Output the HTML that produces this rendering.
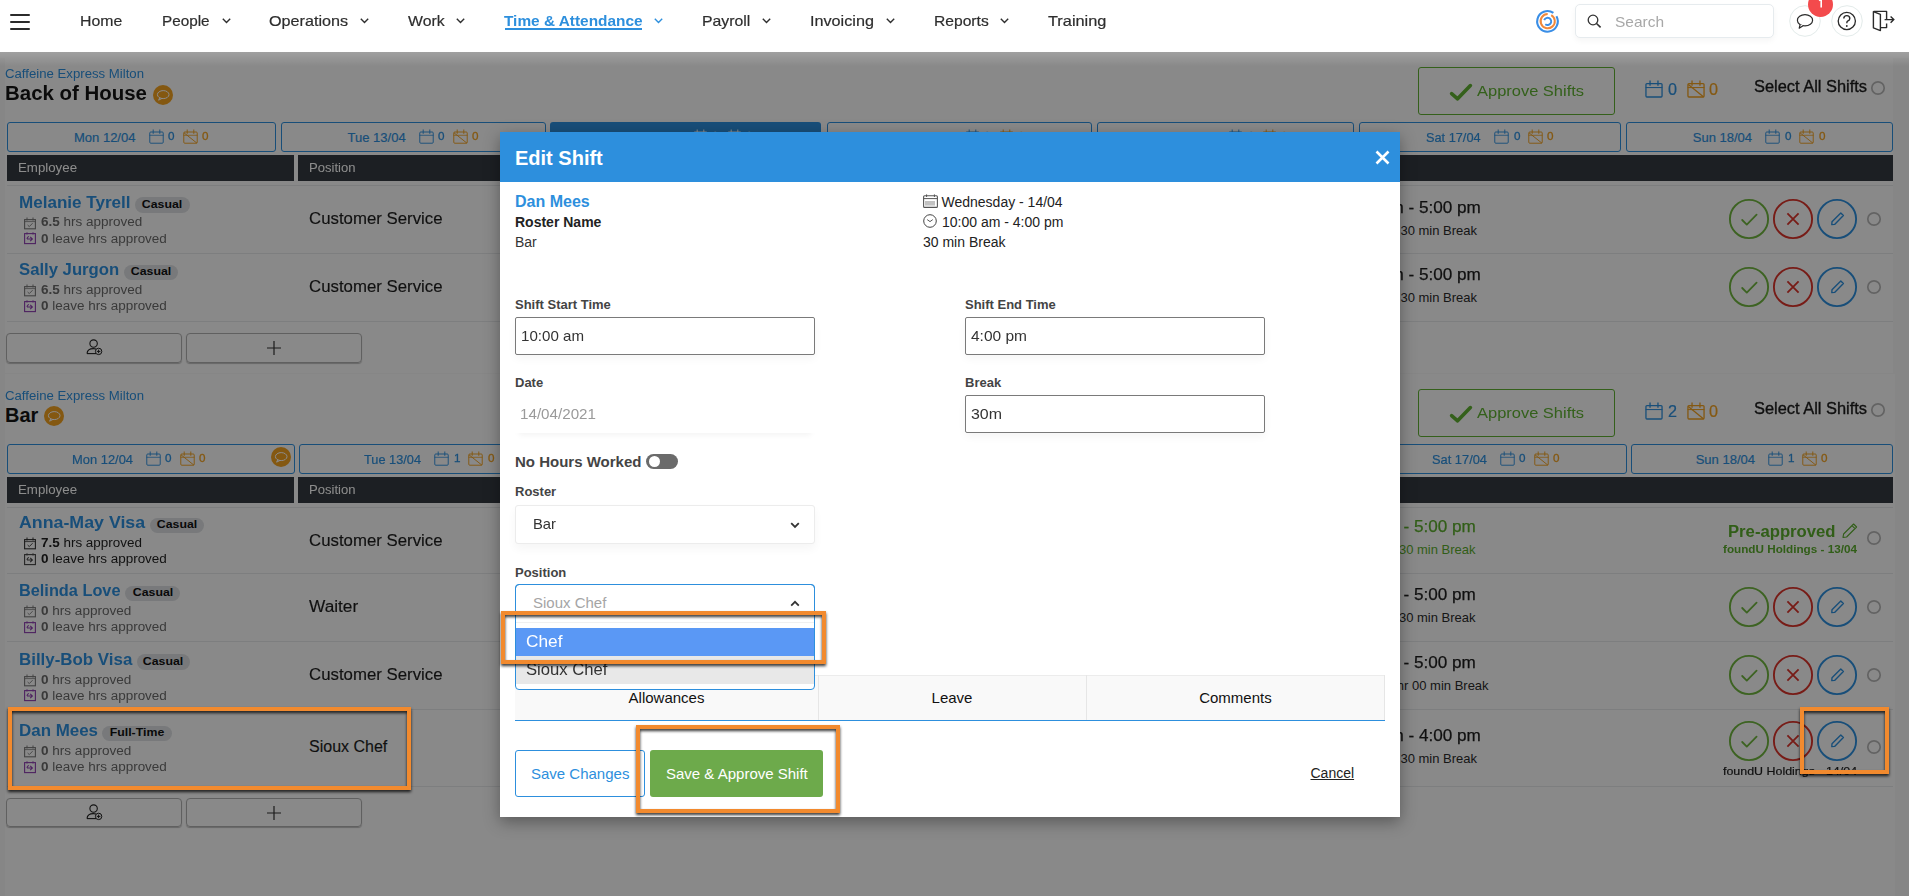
<!DOCTYPE html>
<html><head><meta charset="utf-8"><style>
html,body{margin:0;padding:0;}
body{width:1909px;height:896px;overflow:hidden;position:relative;background:#f4f4f4;font-family:"Liberation Sans",sans-serif;}
.a{position:absolute;}
.t{position:absolute;white-space:nowrap;line-height:1;}
svg.a{overflow:visible;}
</style></head><body>
<div class="a" style="left:0px;top:0px;width:1909px;height:52px;background:#fff;z-index:5"></div>
<div class="a" style="left:10px;top:14px;width:20px;height:2px;background:#2b2b2b;border-radius:1px;z-index:6;"></div>
<div class="a" style="left:10px;top:21px;width:20px;height:2px;background:#2b2b2b;border-radius:1px;z-index:6;"></div>
<div class="a" style="left:10px;top:28px;width:20px;height:2px;background:#2b2b2b;border-radius:1px;z-index:6;"></div>
<div class="t" style="left:79.7px;top:13.2px;font-size:15px;color:#2e2e2e;font-weight:400;transform:scaleX(1.055);transform-origin:0 0;z-index:6;-webkit-text-stroke:0.2px #2e2e2e;">Home</div>
<div class="t" style="left:161.8px;top:13.2px;font-size:15px;color:#2e2e2e;font-weight:400;transform:scaleX(1.019);transform-origin:0 0;z-index:6;-webkit-text-stroke:0.2px #2e2e2e;">People</div>
<svg class="a" style="left:222px;top:18px;z-index:6;" width="9" height="6" viewBox="0 0 9 6"><path d="M0.8 0.8 L4.5 4.5 L8.2 0.8" fill="none" stroke="#2e2e2e" stroke-width="1.4"/></svg>
<div class="t" style="left:269.2px;top:13.2px;font-size:15px;color:#2e2e2e;font-weight:400;transform:scaleX(1.077);transform-origin:0 0;z-index:6;-webkit-text-stroke:0.2px #2e2e2e;">Operations</div>
<svg class="a" style="left:359.6px;top:18px;z-index:6;" width="9" height="6" viewBox="0 0 9 6"><path d="M0.8 0.8 L4.5 4.5 L8.2 0.8" fill="none" stroke="#2e2e2e" stroke-width="1.4"/></svg>
<div class="t" style="left:407.6px;top:13.2px;font-size:15px;color:#2e2e2e;font-weight:400;transform:scaleX(1.054);transform-origin:0 0;z-index:6;-webkit-text-stroke:0.2px #2e2e2e;">Work</div>
<svg class="a" style="left:455.6px;top:18px;z-index:6;" width="9" height="6" viewBox="0 0 9 6"><path d="M0.8 0.8 L4.5 4.5 L8.2 0.8" fill="none" stroke="#2e2e2e" stroke-width="1.4"/></svg>
<div class="t" style="left:701.7px;top:13.2px;font-size:15px;color:#2e2e2e;font-weight:400;transform:scaleX(1.053);transform-origin:0 0;z-index:6;-webkit-text-stroke:0.2px #2e2e2e;">Payroll</div>
<svg class="a" style="left:762px;top:18px;z-index:6;" width="9" height="6" viewBox="0 0 9 6"><path d="M0.8 0.8 L4.5 4.5 L8.2 0.8" fill="none" stroke="#2e2e2e" stroke-width="1.4"/></svg>
<div class="t" style="left:809.9px;top:13.2px;font-size:15px;color:#2e2e2e;font-weight:400;transform:scaleX(1.079);transform-origin:0 0;z-index:6;-webkit-text-stroke:0.2px #2e2e2e;">Invoicing</div>
<svg class="a" style="left:885.7px;top:18px;z-index:6;" width="9" height="6" viewBox="0 0 9 6"><path d="M0.8 0.8 L4.5 4.5 L8.2 0.8" fill="none" stroke="#2e2e2e" stroke-width="1.4"/></svg>
<div class="t" style="left:933.7px;top:13.2px;font-size:15px;color:#2e2e2e;font-weight:400;transform:scaleX(1.042);transform-origin:0 0;z-index:6;-webkit-text-stroke:0.2px #2e2e2e;">Reports</div>
<svg class="a" style="left:999.5px;top:18px;z-index:6;" width="9" height="6" viewBox="0 0 9 6"><path d="M0.8 0.8 L4.5 4.5 L8.2 0.8" fill="none" stroke="#2e2e2e" stroke-width="1.4"/></svg>
<div class="t" style="left:1048.0px;top:13.2px;font-size:15px;color:#2e2e2e;font-weight:400;transform:scaleX(1.089);transform-origin:0 0;z-index:6;-webkit-text-stroke:0.2px #2e2e2e;">Training</div>
<div class="t" style="left:504.0px;top:13.2px;font-size:15px;color:#2d8fdd;font-weight:700;transform:scaleX(1.026);transform-origin:0 0;z-index:6;">Time &amp; Attendance</div>
<div class="a" style="left:504.6px;top:28px;width:137.19999999999993px;height:1.6000000000000014px;background:#2d8fdd;z-index:6;"></div>
<svg class="a" style="left:653.6px;top:18px;z-index:6;" width="9" height="6" viewBox="0 0 9 6"><path d="M0.8 0.8 L4.5 4.5 L8.2 0.8" fill="none" stroke="#2d8fdd" stroke-width="1.4"/></svg>
<svg class="a" style="left:1536px;top:10px;z-index:6;" width="24" height="24" viewBox="0 0 24 24"><path d="M20.42 6.25 A10.3 10.3 0 1 1 17.41 2.96" fill="none" stroke="#3a8ee6" stroke-width="2.1"/><path d="M15.25 5.05 A7.1 7.1 0 1 1 11.70 4.10" fill="none" stroke="#f0883a" stroke-width="2"/><path d="M8.22 10.17 A3.6 3.6 0 1 1 9.29 14.16" fill="none" stroke="#3a8ee6" stroke-width="1.9"/></svg>
<div class="a" style="left:1574.5px;top:3.5px;width:199.0px;height:34.0px;border:1px solid #e6ebee;border-radius:5px;box-sizing:border-box;box-shadow:0 3px 6px rgba(0,0,0,0.04);background:#fff;z-index:6;"></div>
<svg class="a" style="left:1587px;top:14px;z-index:6;" width="15" height="14" viewBox="0 0 15 14"><circle cx="6" cy="6" r="4.8" fill="none" stroke="#333" stroke-width="1.3"/><path d="M9.5 9.5 L13.6 13.4" stroke="#333" stroke-width="1.6"/></svg>
<div class="t" style="left:1614.5px;top:13.7px;font-size:15px;color:#a8a8a8;font-weight:400;transform:scaleX(1.031);transform-origin:0 0;z-index:6;">Search</div>
<svg class="a" style="left:1789px;top:5px;z-index:6;" width="32" height="32" viewBox="0 0 32 32"><circle cx="16" cy="16" r="15.3" fill="#fff" stroke="#e3ebea" stroke-width="1"/><ellipse cx="16" cy="15.2" rx="7.6" ry="5.6" fill="none" stroke="#2a2a2a" stroke-width="1.2"/><path d="M11.2 19.4 L10.2 23.2 L14.4 20.6" fill="#fff" stroke="#2a2a2a" stroke-width="1.2" stroke-linejoin="round"/></svg>
<svg class="a" style="left:1831px;top:5px;z-index:6;" width="32" height="32" viewBox="0 0 32 32"><circle cx="16" cy="16" r="15.3" fill="#fff" stroke="#e3ebea" stroke-width="1"/><circle cx="15.8" cy="16" r="8.6" fill="none" stroke="#2a2a2a" stroke-width="1.3"/><path d="M12.8 13.6 Q12.8 10.6 15.8 10.6 Q18.8 10.6 18.8 13.4 Q18.8 15.2 16.6 16.2 Q15.8 16.7 15.8 18.2" fill="none" stroke="#2a2a2a" stroke-width="1.4"/><circle cx="15.8" cy="21" r="0.9" fill="#2a2a2a"/></svg>
<svg class="a" style="left:1808px;top:-8px;z-index:6;" width="25" height="25" viewBox="0 0 25 25"><circle cx="12.5" cy="12.5" r="12.5" fill="#f34a4c"/></svg>
<svg class="a" style="left:1818px;top:-1px;z-index:6;" width="5" height="9" viewBox="0 0 5 9"><path d="M1 1.6 L3.2 0.4 L3.2 8.6" fill="none" stroke="#fff" stroke-width="1.6" stroke-linejoin="round"/></svg>
<svg class="a" style="left:1872px;top:10px;z-index:6;" width="24" height="22" viewBox="0 0 24 22"><path d="M1.4 1.6 L8.4 4.4 L8.4 20.6 L1.4 17.8 Z" fill="none" stroke="#2a2a2a" stroke-width="1.4" stroke-linejoin="round"/><path d="M1.6 1.4 L14.6 1.4 L14.6 9 M14.6 13.4 L14.6 17.6 L8.6 17.6" fill="none" stroke="#2a2a2a" stroke-width="1.4" stroke-linejoin="round"/><path d="M12.6 9.6 L21.8 9.6 M18.6 6.4 L21.8 9.6 L18.6 12.8" fill="none" stroke="#2a2a2a" stroke-width="1.4"/></svg>
<div class="a" style="left:0;top:52px;width:1909px;height:844px;overflow:hidden;"><div class="a" style="left:0;top:-52px;width:1909px;height:896px;"><div class="a" style="left:0px;top:52px;width:1909px;height:6px;background:#fafafa;"></div>
<div class="a" style="left:5px;top:58px;width:1888px;height:315px;background:#fafafa;"></div>
<div class="a" style="left:5px;top:374px;width:1890px;height:522px;background:#fafafa;"></div>
<div class="t" style="left:5.0px;top:68.0px;font-size:12px;color:#2d8fdd;font-weight:400;transform:scaleX(1.099);transform-origin:0 0;">Caffeine Express Milton</div>
<div class="t" style="left:5.0px;top:83.1px;font-size:20px;color:#151515;font-weight:700;transform:scaleX(1.022);transform-origin:0 0;">Back of House</div>
<svg class="a" style="left:153.0px;top:85.0px;" width="20" height="20" viewBox="0 0 20 20"><circle cx="10.0" cy="10.0" r="10.0" fill="#f0a020"/><ellipse cx="10.2" cy="9.6" rx="5.8" ry="4.0" fill="none" stroke="#fff" stroke-width="1"/><path d="M6.8 12.6 L5.6 15.2 L9.0 13.4" fill="none" stroke="#fff" stroke-width="1"/></svg>
<div class="a" style="left:1418px;top:67px;width:197px;height:47.5px;border:1.5px solid #5fb032;border-radius:3px;box-sizing:border-box;"></div>
<svg class="a" style="left:1449px;top:83px;" width="24" height="19" viewBox="0 0 24 19"><path d="M2.6 10.6 L8.6 15.8 L21.4 2.6" fill="none" stroke="#5fb032" stroke-width="3.6" stroke-linecap="round" stroke-linejoin="round"/></svg>
<div class="t" style="left:1476.5px;top:82.9px;font-size:15px;color:#5fb032;font-weight:400;transform:scaleX(1.097);transform-origin:0 0;">Approve Shifts</div>
<svg class="a" style="left:1644.5px;top:79.5px;" width="18" height="18" viewBox="0 0 18 18"><rect x="0.95" y="3.6" width="16.099999999999998" height="13.39" fill="none" stroke="#2d8fdd" stroke-width="1.3" rx="1"/><line x1="5.040000000000001" y1="0.5" x2="5.040000000000001" y2="5.76" stroke="#2d8fdd" stroke-width="1.3"/><line x1="12.959999999999999" y1="0.5" x2="12.959999999999999" y2="5.76" stroke="#2d8fdd" stroke-width="1.3"/><line x1="0.65" y1="7.56" x2="17.35" y2="7.56" stroke="#2d8fdd" stroke-width="1.04"/></svg>
<div class="t" style="left:1667.5px;top:82.0px;font-size:16px;color:#2d8fdd;font-weight:400;transform:scaleX(1.012);transform-origin:0 0;-webkit-text-stroke:0.2px;">0</div>
<svg class="a" style="left:1686.5px;top:79.5px;" width="18" height="18" viewBox="0 0 18 18"><rect x="0.95" y="3.6" width="16.099999999999998" height="13.39" fill="none" stroke="#f0a020" stroke-width="1.3" rx="1"/><line x1="5.040000000000001" y1="0.5" x2="5.040000000000001" y2="5.76" stroke="#f0a020" stroke-width="1.3"/><line x1="12.959999999999999" y1="0.5" x2="12.959999999999999" y2="5.76" stroke="#f0a020" stroke-width="1.3"/><line x1="0.65" y1="7.56" x2="17.35" y2="7.56" stroke="#f0a020" stroke-width="1.04"/><line x1="1.3" y1="4.5" x2="16.7" y2="17.099999999999998" stroke="#f0a020" stroke-width="1.3"/></svg>
<div class="t" style="left:1708.5px;top:82.0px;font-size:16px;color:#f0a020;font-weight:400;transform:scaleX(1.012);transform-origin:0 0;-webkit-text-stroke:0.2px;">0</div>
<div class="t" style="left:1753.5px;top:78.8px;font-size:16px;color:#1c1c1c;font-weight:400;transform:scaleX(1.025);transform-origin:0 0;-webkit-text-stroke:0.35px #1c1c1c;">Select All Shifts</div>
<svg class="a" style="left:1871px;top:81px;" width="14" height="14" viewBox="0 0 14 14"><circle cx="7" cy="7" r="6.2" fill="none" stroke="#b5b5b5" stroke-width="1.7"/></svg>
<div class="a" style="left:7px;top:122px;width:269px;height:29.5px;border:1.3px solid #2d8fdd;border-radius:3px;box-sizing:border-box;"></div>
<div class="t" style="left:74.0px;top:131.0px;font-size:13px;color:#2d8fdd;font-weight:400;-webkit-text-stroke:0.2px #2d8fdd;">Mon 12/04</div>
<svg class="a" style="left:148.5px;top:129.3px;" width="15" height="15" viewBox="0 0 15 15"><rect x="0.7749999999999999" y="3.0" width="13.450000000000001" height="11.225000000000001" fill="none" stroke="#2d8fdd" stroke-width="0.95" rx="1"/><line x1="4.2" y1="0.5" x2="4.2" y2="4.8" stroke="#2d8fdd" stroke-width="0.95"/><line x1="10.799999999999999" y1="0.5" x2="10.799999999999999" y2="4.8" stroke="#2d8fdd" stroke-width="0.95"/><line x1="0.475" y1="6.3" x2="14.525" y2="6.3" stroke="#2d8fdd" stroke-width="0.76"/></svg>
<div class="t" style="left:168.3px;top:130.9px;font-size:11.5px;color:#2d8fdd;font-weight:400;transform:scaleX(1.016);transform-origin:0 0;-webkit-text-stroke:0.3px #2d8fdd;">0</div>
<svg class="a" style="left:182.5px;top:129.3px;" width="15" height="15" viewBox="0 0 15 15"><rect x="0.7749999999999999" y="3.0" width="13.450000000000001" height="11.225000000000001" fill="none" stroke="#f0a020" stroke-width="0.95" rx="1"/><line x1="4.2" y1="0.5" x2="4.2" y2="4.8" stroke="#f0a020" stroke-width="0.95"/><line x1="10.799999999999999" y1="0.5" x2="10.799999999999999" y2="4.8" stroke="#f0a020" stroke-width="0.95"/><line x1="0.475" y1="6.3" x2="14.525" y2="6.3" stroke="#f0a020" stroke-width="0.76"/><line x1="0.95" y1="3.75" x2="14.05" y2="14.25" stroke="#f0a020" stroke-width="0.95"/></svg>
<div class="t" style="left:201.8px;top:130.9px;font-size:11.5px;color:#f0a020;font-weight:400;transform:scaleX(1.016);transform-origin:0 0;-webkit-text-stroke:0.3px #f0a020;">0</div>
<div class="a" style="left:281px;top:122px;width:264.6px;height:29.5px;border:1.3px solid #2d8fdd;border-radius:3px;box-sizing:border-box;"></div>
<div class="t" style="left:347.6px;top:131.0px;font-size:13px;color:#2d8fdd;font-weight:400;-webkit-text-stroke:0.2px #2d8fdd;">Tue 13/04</div>
<svg class="a" style="left:418.55px;top:129.3px;" width="15" height="15" viewBox="0 0 15 15"><rect x="0.7749999999999999" y="3.0" width="13.450000000000001" height="11.225000000000001" fill="none" stroke="#2d8fdd" stroke-width="0.95" rx="1"/><line x1="4.2" y1="0.5" x2="4.2" y2="4.8" stroke="#2d8fdd" stroke-width="0.95"/><line x1="10.799999999999999" y1="0.5" x2="10.799999999999999" y2="4.8" stroke="#2d8fdd" stroke-width="0.95"/><line x1="0.475" y1="6.3" x2="14.525" y2="6.3" stroke="#2d8fdd" stroke-width="0.76"/></svg>
<div class="t" style="left:438.4px;top:130.9px;font-size:11.5px;color:#2d8fdd;font-weight:400;transform:scaleX(1.016);transform-origin:0 0;-webkit-text-stroke:0.3px #2d8fdd;">0</div>
<svg class="a" style="left:452.55px;top:129.3px;" width="15" height="15" viewBox="0 0 15 15"><rect x="0.7749999999999999" y="3.0" width="13.450000000000001" height="11.225000000000001" fill="none" stroke="#f0a020" stroke-width="0.95" rx="1"/><line x1="4.2" y1="0.5" x2="4.2" y2="4.8" stroke="#f0a020" stroke-width="0.95"/><line x1="10.799999999999999" y1="0.5" x2="10.799999999999999" y2="4.8" stroke="#f0a020" stroke-width="0.95"/><line x1="0.475" y1="6.3" x2="14.525" y2="6.3" stroke="#f0a020" stroke-width="0.76"/><line x1="0.95" y1="3.75" x2="14.05" y2="14.25" stroke="#f0a020" stroke-width="0.95"/></svg>
<div class="t" style="left:471.9px;top:130.9px;font-size:11.5px;color:#f0a020;font-weight:400;transform:scaleX(1.016);transform-origin:0 0;-webkit-text-stroke:0.3px #f0a020;">0</div>
<div class="a" style="left:550.3px;top:122px;width:271.20000000000005px;height:29.5px;background:#2d8fdd;border-radius:3px 3px 0 0;"></div>
<div class="t" style="left:618.6px;top:131.0px;font-size:13px;color:#fff;font-weight:400;transform:scaleX(0.974);transform-origin:0 0;-webkit-text-stroke:0.2px #fff;">Wed 14/04</div>
<svg class="a" style="left:692.65px;top:129.3px;" width="15" height="15" viewBox="0 0 15 15"><rect x="0.7749999999999999" y="3.0" width="13.450000000000001" height="11.225000000000001" fill="none" stroke="#fff" stroke-width="0.95" rx="1"/><line x1="4.2" y1="0.5" x2="4.2" y2="4.8" stroke="#fff" stroke-width="0.95"/><line x1="10.799999999999999" y1="0.5" x2="10.799999999999999" y2="4.8" stroke="#fff" stroke-width="0.95"/><line x1="0.475" y1="6.3" x2="14.525" y2="6.3" stroke="#fff" stroke-width="0.76"/></svg>
<div class="t" style="left:712.4px;top:130.9px;font-size:11.5px;color:#fff;font-weight:400;transform:scaleX(1.016);transform-origin:0 0;-webkit-text-stroke:0.3px #fff;">0</div>
<svg class="a" style="left:726.65px;top:129.3px;" width="15" height="15" viewBox="0 0 15 15"><rect x="0.7749999999999999" y="3.0" width="13.450000000000001" height="11.225000000000001" fill="none" stroke="#fff" stroke-width="0.95" rx="1"/><line x1="4.2" y1="0.5" x2="4.2" y2="4.8" stroke="#fff" stroke-width="0.95"/><line x1="10.799999999999999" y1="0.5" x2="10.799999999999999" y2="4.8" stroke="#fff" stroke-width="0.95"/><line x1="0.475" y1="6.3" x2="14.525" y2="6.3" stroke="#fff" stroke-width="0.76"/><line x1="0.95" y1="3.75" x2="14.05" y2="14.25" stroke="#fff" stroke-width="0.95"/></svg>
<div class="t" style="left:745.9px;top:130.9px;font-size:11.5px;color:#fff;font-weight:400;transform:scaleX(1.016);transform-origin:0 0;-webkit-text-stroke:0.3px #fff;">0</div>
<div class="a" style="left:826.5px;top:122px;width:265.70000000000005px;height:29.5px;border:1.3px solid #2d8fdd;border-radius:3px;box-sizing:border-box;"></div>
<div class="t" style="left:893.6px;top:131.0px;font-size:13px;color:#2d8fdd;font-weight:400;transform:scaleX(0.991);transform-origin:0 0;-webkit-text-stroke:0.2px #2d8fdd;">Thu 15/04</div>
<svg class="a" style="left:964.6px;top:129.3px;" width="15" height="15" viewBox="0 0 15 15"><rect x="0.7749999999999999" y="3.0" width="13.450000000000001" height="11.225000000000001" fill="none" stroke="#2d8fdd" stroke-width="0.95" rx="1"/><line x1="4.2" y1="0.5" x2="4.2" y2="4.8" stroke="#2d8fdd" stroke-width="0.95"/><line x1="10.799999999999999" y1="0.5" x2="10.799999999999999" y2="4.8" stroke="#2d8fdd" stroke-width="0.95"/><line x1="0.475" y1="6.3" x2="14.525" y2="6.3" stroke="#2d8fdd" stroke-width="0.76"/></svg>
<div class="t" style="left:984.4px;top:130.9px;font-size:11.5px;color:#2d8fdd;font-weight:400;transform:scaleX(1.016);transform-origin:0 0;-webkit-text-stroke:0.3px #2d8fdd;">0</div>
<svg class="a" style="left:998.6px;top:129.3px;" width="15" height="15" viewBox="0 0 15 15"><rect x="0.7749999999999999" y="3.0" width="13.450000000000001" height="11.225000000000001" fill="none" stroke="#f0a020" stroke-width="0.95" rx="1"/><line x1="4.2" y1="0.5" x2="4.2" y2="4.8" stroke="#f0a020" stroke-width="0.95"/><line x1="10.799999999999999" y1="0.5" x2="10.799999999999999" y2="4.8" stroke="#f0a020" stroke-width="0.95"/><line x1="0.475" y1="6.3" x2="14.525" y2="6.3" stroke="#f0a020" stroke-width="0.76"/><line x1="0.95" y1="3.75" x2="14.05" y2="14.25" stroke="#f0a020" stroke-width="0.95"/></svg>
<div class="t" style="left:1017.9px;top:130.9px;font-size:11.5px;color:#f0a020;font-weight:400;transform:scaleX(1.016);transform-origin:0 0;-webkit-text-stroke:0.3px #f0a020;">0</div>
<div class="a" style="left:1097.2px;top:122px;width:257.20000000000005px;height:29.5px;border:1.3px solid #2d8fdd;border-radius:3px;box-sizing:border-box;"></div>
<div class="t" style="left:1163.1px;top:131.0px;font-size:13px;color:#2d8fdd;font-weight:400;transform:scaleX(1.014);transform-origin:0 0;-webkit-text-stroke:0.2px #2d8fdd;">Fri 16/04</div>
<svg class="a" style="left:1228.0500000000002px;top:129.3px;" width="15" height="15" viewBox="0 0 15 15"><rect x="0.7749999999999999" y="3.0" width="13.450000000000001" height="11.225000000000001" fill="none" stroke="#2d8fdd" stroke-width="0.95" rx="1"/><line x1="4.2" y1="0.5" x2="4.2" y2="4.8" stroke="#2d8fdd" stroke-width="0.95"/><line x1="10.799999999999999" y1="0.5" x2="10.799999999999999" y2="4.8" stroke="#2d8fdd" stroke-width="0.95"/><line x1="0.475" y1="6.3" x2="14.525" y2="6.3" stroke="#2d8fdd" stroke-width="0.76"/></svg>
<div class="t" style="left:1247.9px;top:130.9px;font-size:11.5px;color:#2d8fdd;font-weight:400;transform:scaleX(1.016);transform-origin:0 0;-webkit-text-stroke:0.3px #2d8fdd;">0</div>
<svg class="a" style="left:1262.0500000000002px;top:129.3px;" width="15" height="15" viewBox="0 0 15 15"><rect x="0.7749999999999999" y="3.0" width="13.450000000000001" height="11.225000000000001" fill="none" stroke="#f0a020" stroke-width="0.95" rx="1"/><line x1="4.2" y1="0.5" x2="4.2" y2="4.8" stroke="#f0a020" stroke-width="0.95"/><line x1="10.799999999999999" y1="0.5" x2="10.799999999999999" y2="4.8" stroke="#f0a020" stroke-width="0.95"/><line x1="0.475" y1="6.3" x2="14.525" y2="6.3" stroke="#f0a020" stroke-width="0.76"/><line x1="0.95" y1="3.75" x2="14.05" y2="14.25" stroke="#f0a020" stroke-width="0.95"/></svg>
<div class="t" style="left:1281.4px;top:130.9px;font-size:11.5px;color:#f0a020;font-weight:400;transform:scaleX(1.016);transform-origin:0 0;-webkit-text-stroke:0.3px #f0a020;">0</div>
<div class="a" style="left:1359.4px;top:122px;width:261.89999999999986px;height:29.5px;border:1.3px solid #2d8fdd;border-radius:3px;box-sizing:border-box;"></div>
<div class="t" style="left:1426.3px;top:131.0px;font-size:13px;color:#2d8fdd;font-weight:400;transform:scaleX(0.981);transform-origin:0 0;-webkit-text-stroke:0.2px #2d8fdd;">Sat 17/04</div>
<svg class="a" style="left:1493.8999999999999px;top:129.3px;" width="15" height="15" viewBox="0 0 15 15"><rect x="0.7749999999999999" y="3.0" width="13.450000000000001" height="11.225000000000001" fill="none" stroke="#2d8fdd" stroke-width="0.95" rx="1"/><line x1="4.2" y1="0.5" x2="4.2" y2="4.8" stroke="#2d8fdd" stroke-width="0.95"/><line x1="10.799999999999999" y1="0.5" x2="10.799999999999999" y2="4.8" stroke="#2d8fdd" stroke-width="0.95"/><line x1="0.475" y1="6.3" x2="14.525" y2="6.3" stroke="#2d8fdd" stroke-width="0.76"/></svg>
<div class="t" style="left:1513.7px;top:130.9px;font-size:11.5px;color:#2d8fdd;font-weight:400;transform:scaleX(1.016);transform-origin:0 0;-webkit-text-stroke:0.3px #2d8fdd;">0</div>
<svg class="a" style="left:1527.8999999999999px;top:129.3px;" width="15" height="15" viewBox="0 0 15 15"><rect x="0.7749999999999999" y="3.0" width="13.450000000000001" height="11.225000000000001" fill="none" stroke="#f0a020" stroke-width="0.95" rx="1"/><line x1="4.2" y1="0.5" x2="4.2" y2="4.8" stroke="#f0a020" stroke-width="0.95"/><line x1="10.799999999999999" y1="0.5" x2="10.799999999999999" y2="4.8" stroke="#f0a020" stroke-width="0.95"/><line x1="0.475" y1="6.3" x2="14.525" y2="6.3" stroke="#f0a020" stroke-width="0.76"/><line x1="0.95" y1="3.75" x2="14.05" y2="14.25" stroke="#f0a020" stroke-width="0.95"/></svg>
<div class="t" style="left:1547.2px;top:130.9px;font-size:11.5px;color:#f0a020;font-weight:400;transform:scaleX(1.016);transform-origin:0 0;-webkit-text-stroke:0.3px #f0a020;">0</div>
<div class="a" style="left:1626px;top:122px;width:266.5px;height:29.5px;border:1.3px solid #2d8fdd;border-radius:3px;box-sizing:border-box;"></div>
<div class="t" style="left:1692.8px;top:131.0px;font-size:13px;color:#2d8fdd;font-weight:400;-webkit-text-stroke:0.2px #2d8fdd;">Sun 18/04</div>
<svg class="a" style="left:1765.25px;top:129.3px;" width="15" height="15" viewBox="0 0 15 15"><rect x="0.7749999999999999" y="3.0" width="13.450000000000001" height="11.225000000000001" fill="none" stroke="#2d8fdd" stroke-width="0.95" rx="1"/><line x1="4.2" y1="0.5" x2="4.2" y2="4.8" stroke="#2d8fdd" stroke-width="0.95"/><line x1="10.799999999999999" y1="0.5" x2="10.799999999999999" y2="4.8" stroke="#2d8fdd" stroke-width="0.95"/><line x1="0.475" y1="6.3" x2="14.525" y2="6.3" stroke="#2d8fdd" stroke-width="0.76"/></svg>
<div class="t" style="left:1785.0px;top:130.9px;font-size:11.5px;color:#2d8fdd;font-weight:400;transform:scaleX(1.016);transform-origin:0 0;-webkit-text-stroke:0.3px #2d8fdd;">0</div>
<svg class="a" style="left:1799.25px;top:129.3px;" width="15" height="15" viewBox="0 0 15 15"><rect x="0.7749999999999999" y="3.0" width="13.450000000000001" height="11.225000000000001" fill="none" stroke="#f0a020" stroke-width="0.95" rx="1"/><line x1="4.2" y1="0.5" x2="4.2" y2="4.8" stroke="#f0a020" stroke-width="0.95"/><line x1="10.799999999999999" y1="0.5" x2="10.799999999999999" y2="4.8" stroke="#f0a020" stroke-width="0.95"/><line x1="0.475" y1="6.3" x2="14.525" y2="6.3" stroke="#f0a020" stroke-width="0.76"/><line x1="0.95" y1="3.75" x2="14.05" y2="14.25" stroke="#f0a020" stroke-width="0.95"/></svg>
<div class="t" style="left:1818.5px;top:130.9px;font-size:11.5px;color:#f0a020;font-weight:400;transform:scaleX(1.016);transform-origin:0 0;-webkit-text-stroke:0.3px #f0a020;">0</div>
<div class="a" style="left:7px;top:155px;width:287px;height:25.69999999999999px;background:#343a40;"></div>
<div class="a" style="left:298px;top:155px;width:1594.5px;height:25.69999999999999px;background:#343a40;"></div>
<div class="t" style="left:18.0px;top:161.6px;font-size:12px;color:#fff;font-weight:400;transform:scaleX(1.106);transform-origin:0 0;">Employee</div>
<div class="t" style="left:309.0px;top:162.4px;font-size:12px;color:#fff;font-weight:400;transform:scaleX(1.089);transform-origin:0 0;">Position</div>
<div class="a" style="left:7px;top:185.4px;width:1885.5px;height:1.0px;background:#e4e6e8;"></div>
<div class="a" style="left:7px;top:253px;width:1885.5px;height:1px;background:#e4e6e8;"></div>
<div class="a" style="left:7px;top:321px;width:1885.5px;height:1px;background:#e4e6e8;"></div>
<div class="t" style="left:19.0px;top:194.7px;font-size:16px;color:#2d8fdd;font-weight:700;transform:scaleX(1.066);transform-origin:0 0;">Melanie Tyrell</div>
<div class="a" style="left:135px;top:197.2px;width:54.599999999999994px;height:15.599999999999994px;background:#dadde0;border-radius:8px;"></div>
<div class="t" style="left:162.3px;top:198.5px;font-size:11px;color:#111;font-weight:700;transform:translateX(-50%) scaleX(1.12);">Casual</div>
<svg class="a" style="left:24px;top:216.7px;" width="12" height="12" viewBox="0 0 12 12"><rect x="0.6" y="2.6" width="10.8" height="9.2" fill="none" stroke="#7a7a7a" stroke-width="1.1"/><line x1="3" y1="0.5" x2="3" y2="3.5" stroke="#7a7a7a" stroke-width="1"/><line x1="9" y1="0.5" x2="9" y2="3.5" stroke="#7a7a7a" stroke-width="1"/><line x1="0.6" y1="4.6" x2="11.4" y2="4.6" stroke="#7a7a7a" stroke-width="0.8"/><path d="M3.6 8 L5.3 9.6 L8.6 6.2" fill="none" stroke="#7a7a7a" stroke-width="0.9"/></svg>
<div class="t" style="left:40.5px;top:216.4px;font-size:12.5px;color:#6a6a6a;font-weight:400;transform:scaleX(1.080);transform-origin:0 0;"><b>6.5</b> hrs approved</div>
<svg class="a" style="left:24px;top:232.1px;" width="12" height="12" viewBox="0 0 12 12"><rect x="0.6" y="1.6" width="10.8" height="10" fill="none" stroke="#8e3fb0" stroke-width="1.1"/><line x1="3" y1="0.3" x2="3" y2="2.5" stroke="#8e3fb0" stroke-width="1"/><line x1="9" y1="0.3" x2="9" y2="2.5" stroke="#8e3fb0" stroke-width="1"/><path d="M3 7 H8.2 M6.2 4.8 L8.4 7 L6.2 9.2 M5 4.5 Q3 4.8 3 7" fill="none" stroke="#8e3fb0" stroke-width="1.1"/></svg>
<div class="t" style="left:40.5px;top:232.6px;font-size:12.5px;color:#6a6a6a;font-weight:400;transform:scaleX(1.078);transform-origin:0 0;"><b>0</b> leave hrs approved</div>
<div class="t" style="left:309.0px;top:211.1px;font-size:16px;color:#1e1e1e;font-weight:400;transform:scaleX(1.050);transform-origin:0 0;-webkit-text-stroke:0.15px #1e1e1e;">Customer Service</div>
<div class="t" style="left:19.0px;top:262.1px;font-size:16px;color:#2d8fdd;font-weight:700;transform:scaleX(1.043);transform-origin:0 0;">Sally Jurgon</div>
<div class="a" style="left:124.2px;top:264.6px;width:53.499999999999986px;height:15.600000000000023px;background:#dadde0;border-radius:8px;"></div>
<div class="t" style="left:150.9px;top:265.9px;font-size:11px;color:#111;font-weight:700;transform:translateX(-50%) scaleX(1.12);">Casual</div>
<svg class="a" style="left:24px;top:284.1px;" width="12" height="12" viewBox="0 0 12 12"><rect x="0.6" y="2.6" width="10.8" height="9.2" fill="none" stroke="#7a7a7a" stroke-width="1.1"/><line x1="3" y1="0.5" x2="3" y2="3.5" stroke="#7a7a7a" stroke-width="1"/><line x1="9" y1="0.5" x2="9" y2="3.5" stroke="#7a7a7a" stroke-width="1"/><line x1="0.6" y1="4.6" x2="11.4" y2="4.6" stroke="#7a7a7a" stroke-width="0.8"/><path d="M3.6 8 L5.3 9.6 L8.6 6.2" fill="none" stroke="#7a7a7a" stroke-width="0.9"/></svg>
<div class="t" style="left:40.5px;top:283.8px;font-size:12.5px;color:#6a6a6a;font-weight:400;transform:scaleX(1.080);transform-origin:0 0;"><b>6.5</b> hrs approved</div>
<svg class="a" style="left:24px;top:299.5px;" width="12" height="12" viewBox="0 0 12 12"><rect x="0.6" y="1.6" width="10.8" height="10" fill="none" stroke="#8e3fb0" stroke-width="1.1"/><line x1="3" y1="0.3" x2="3" y2="2.5" stroke="#8e3fb0" stroke-width="1"/><line x1="9" y1="0.3" x2="9" y2="2.5" stroke="#8e3fb0" stroke-width="1"/><path d="M3 7 H8.2 M6.2 4.8 L8.4 7 L6.2 9.2 M5 4.5 Q3 4.8 3 7" fill="none" stroke="#8e3fb0" stroke-width="1.1"/></svg>
<div class="t" style="left:40.5px;top:300.0px;font-size:12.5px;color:#6a6a6a;font-weight:400;transform:scaleX(1.078);transform-origin:0 0;"><b>0</b> leave hrs approved</div>
<div class="t" style="left:309.0px;top:278.5px;font-size:16px;color:#1e1e1e;font-weight:400;transform:scaleX(1.050);transform-origin:0 0;-webkit-text-stroke:0.15px #1e1e1e;">Customer Service</div>
<div class="t" style="right:428.0px;top:199.9px;font-size:16px;color:#1e1e1e;font-weight:400;-webkit-text-stroke:0.25px #1e1e1e;transform:scaleX(1.07);transform-origin:100% 0;">10:00 am - 5:00 pm</div>
<div class="t" style="right:432.0px;top:224.0px;font-size:13px;color:#2a2a2a;font-weight:400;">30 min Break</div>
<svg class="a" style="left:1729px;top:199px;" width="40" height="40" viewBox="0 0 40 40"><circle cx="20" cy="20" r="19.1" fill="none" stroke="#6fb43f" stroke-width="1.9"/><path d="M13.2 21 L17.8 25.6 L27.6 15.6" fill="none" stroke="#6fb43f" stroke-width="1.8" stroke-linecap="round" stroke-linejoin="round"/></svg>
<svg class="a" style="left:1773px;top:199px;" width="40" height="40" viewBox="0 0 40 40"><circle cx="20" cy="20" r="19.1" fill="none" stroke="#d9342b" stroke-width="1.9"/><path d="M14.4 14.4 L25.6 25.6 M25.6 14.4 L14.4 25.6" fill="none" stroke="#d9342b" stroke-width="1.8"/></svg>
<svg class="a" style="left:1817px;top:199px;" width="40" height="40" viewBox="0 0 40 40"><circle cx="20" cy="20" r="19.1" fill="none" stroke="#2d8fdd" stroke-width="1.9"/><path d="M15 22.8 L23.8 14 L26.4 16.6 L17.6 25.4 L14.8 25.6 Z" fill="none" stroke="#2d8fdd" stroke-width="1.4" stroke-linejoin="round"/></svg>
<svg class="a" style="left:1867px;top:212px;" width="14" height="14" viewBox="0 0 14 14"><circle cx="7" cy="7" r="6.2" fill="none" stroke="#b5b5b5" stroke-width="1.7"/></svg>
<div class="t" style="right:428.0px;top:267.3px;font-size:16px;color:#1e1e1e;font-weight:400;-webkit-text-stroke:0.25px #1e1e1e;transform:scaleX(1.07);transform-origin:100% 0;">10:00 am - 5:00 pm</div>
<div class="t" style="right:432.0px;top:291.4px;font-size:13px;color:#2a2a2a;font-weight:400;">30 min Break</div>
<svg class="a" style="left:1729px;top:267px;" width="40" height="40" viewBox="0 0 40 40"><circle cx="20" cy="20" r="19.1" fill="none" stroke="#6fb43f" stroke-width="1.9"/><path d="M13.2 21 L17.8 25.6 L27.6 15.6" fill="none" stroke="#6fb43f" stroke-width="1.8" stroke-linecap="round" stroke-linejoin="round"/></svg>
<svg class="a" style="left:1773px;top:267px;" width="40" height="40" viewBox="0 0 40 40"><circle cx="20" cy="20" r="19.1" fill="none" stroke="#d9342b" stroke-width="1.9"/><path d="M14.4 14.4 L25.6 25.6 M25.6 14.4 L14.4 25.6" fill="none" stroke="#d9342b" stroke-width="1.8"/></svg>
<svg class="a" style="left:1817px;top:267px;" width="40" height="40" viewBox="0 0 40 40"><circle cx="20" cy="20" r="19.1" fill="none" stroke="#2d8fdd" stroke-width="1.9"/><path d="M15 22.8 L23.8 14 L26.4 16.6 L17.6 25.4 L14.8 25.6 Z" fill="none" stroke="#2d8fdd" stroke-width="1.4" stroke-linejoin="round"/></svg>
<svg class="a" style="left:1867px;top:280px;" width="14" height="14" viewBox="0 0 14 14"><circle cx="7" cy="7" r="6.2" fill="none" stroke="#b5b5b5" stroke-width="1.7"/></svg>
<div class="a" style="left:5.5px;top:333px;width:176.1px;height:29.600000000000023px;border:1px solid #b0b0b0;border-radius:4px;box-sizing:border-box;box-shadow:0 1px 1px rgba(0,0,0,0.25);"></div>
<div class="a" style="left:186.4px;top:333px;width:175.9px;height:29.600000000000023px;border:1px solid #b0b0b0;border-radius:4px;box-sizing:border-box;box-shadow:0 1px 1px rgba(0,0,0,0.25);"></div>
<svg class="a" style="left:85.5px;top:339px;" width="17" height="16" viewBox="0 0 17 16"><circle cx="7.6" cy="4.6" r="3.7" fill="none" stroke="#222" stroke-width="1.1"/><path d="M1 14.6 Q1.4 9.6 7.4 9.6 Q9 9.6 10 10" fill="none" stroke="#222" stroke-width="1.1"/><path d="M1 14.6 L10 14.6" stroke="#222" stroke-width="1.1"/><circle cx="12.6" cy="12.4" r="3.2" fill="none" stroke="#222" stroke-width="1"/><path d="M12.6 10.6 V14.2 M10.8 12.4 H14.4" stroke="#222" stroke-width="1"/></svg>
<svg class="a" style="left:266px;top:340px;" width="16" height="16" viewBox="0 0 16 16"><path d="M8 1 V15 M1 8 H15" stroke="#333" stroke-width="1.2"/></svg>
<div class="t" style="left:5.0px;top:390.0px;font-size:12px;color:#2d8fdd;font-weight:400;transform:scaleX(1.099);transform-origin:0 0;">Caffeine Express Milton</div>
<div class="t" style="left:5.0px;top:405.1px;font-size:20px;color:#151515;font-weight:700;">Bar</div>
<svg class="a" style="left:44.0px;top:406.0px;" width="20" height="20" viewBox="0 0 20 20"><circle cx="10.0" cy="10.0" r="10.0" fill="#f0a020"/><ellipse cx="10.2" cy="9.6" rx="5.8" ry="4.0" fill="none" stroke="#fff" stroke-width="1"/><path d="M6.8 12.6 L5.6 15.2 L9.0 13.4" fill="none" stroke="#fff" stroke-width="1"/></svg>
<div class="a" style="left:1418px;top:389px;width:197px;height:47.5px;border:1.5px solid #5fb032;border-radius:3px;box-sizing:border-box;"></div>
<svg class="a" style="left:1449px;top:405px;" width="24" height="19" viewBox="0 0 24 19"><path d="M2.6 10.6 L8.6 15.8 L21.4 2.6" fill="none" stroke="#5fb032" stroke-width="3.6" stroke-linecap="round" stroke-linejoin="round"/></svg>
<div class="t" style="left:1476.5px;top:404.9px;font-size:15px;color:#5fb032;font-weight:400;transform:scaleX(1.097);transform-origin:0 0;">Approve Shifts</div>
<svg class="a" style="left:1644.5px;top:401.5px;" width="18" height="18" viewBox="0 0 18 18"><rect x="0.95" y="3.6" width="16.099999999999998" height="13.39" fill="none" stroke="#2d8fdd" stroke-width="1.3" rx="1"/><line x1="5.040000000000001" y1="0.5" x2="5.040000000000001" y2="5.76" stroke="#2d8fdd" stroke-width="1.3"/><line x1="12.959999999999999" y1="0.5" x2="12.959999999999999" y2="5.76" stroke="#2d8fdd" stroke-width="1.3"/><line x1="0.65" y1="7.56" x2="17.35" y2="7.56" stroke="#2d8fdd" stroke-width="1.04"/></svg>
<div class="t" style="left:1667.5px;top:404.0px;font-size:16px;color:#2d8fdd;font-weight:400;transform:scaleX(1.012);transform-origin:0 0;-webkit-text-stroke:0.2px;">2</div>
<svg class="a" style="left:1686.5px;top:401.5px;" width="18" height="18" viewBox="0 0 18 18"><rect x="0.95" y="3.6" width="16.099999999999998" height="13.39" fill="none" stroke="#f0a020" stroke-width="1.3" rx="1"/><line x1="5.040000000000001" y1="0.5" x2="5.040000000000001" y2="5.76" stroke="#f0a020" stroke-width="1.3"/><line x1="12.959999999999999" y1="0.5" x2="12.959999999999999" y2="5.76" stroke="#f0a020" stroke-width="1.3"/><line x1="0.65" y1="7.56" x2="17.35" y2="7.56" stroke="#f0a020" stroke-width="1.04"/><line x1="1.3" y1="4.5" x2="16.7" y2="17.099999999999998" stroke="#f0a020" stroke-width="1.3"/></svg>
<div class="t" style="left:1708.5px;top:404.0px;font-size:16px;color:#f0a020;font-weight:400;transform:scaleX(1.012);transform-origin:0 0;-webkit-text-stroke:0.2px;">0</div>
<div class="t" style="left:1753.5px;top:400.8px;font-size:16px;color:#1c1c1c;font-weight:400;transform:scaleX(1.025);transform-origin:0 0;-webkit-text-stroke:0.35px #1c1c1c;">Select All Shifts</div>
<svg class="a" style="left:1871px;top:403px;" width="14" height="14" viewBox="0 0 14 14"><circle cx="7" cy="7" r="6.2" fill="none" stroke="#b5b5b5" stroke-width="1.7"/></svg>
<div class="a" style="left:7px;top:444px;width:287.5px;height:29.5px;border:1.3px solid #2d8fdd;border-radius:3px;box-sizing:border-box;"></div>
<div class="t" style="left:71.5px;top:453.0px;font-size:13px;color:#2d8fdd;font-weight:400;transform:scaleX(0.993);transform-origin:0 0;-webkit-text-stroke:0.2px #2d8fdd;">Mon 12/04</div>
<svg class="a" style="left:145.5px;top:451.3px;" width="15" height="15" viewBox="0 0 15 15"><rect x="0.7749999999999999" y="3.0" width="13.450000000000001" height="11.225000000000001" fill="none" stroke="#2d8fdd" stroke-width="0.95" rx="1"/><line x1="4.2" y1="0.5" x2="4.2" y2="4.8" stroke="#2d8fdd" stroke-width="0.95"/><line x1="10.799999999999999" y1="0.5" x2="10.799999999999999" y2="4.8" stroke="#2d8fdd" stroke-width="0.95"/><line x1="0.475" y1="6.3" x2="14.525" y2="6.3" stroke="#2d8fdd" stroke-width="0.76"/></svg>
<div class="t" style="left:165.3px;top:452.9px;font-size:11.5px;color:#2d8fdd;font-weight:400;transform:scaleX(1.016);transform-origin:0 0;-webkit-text-stroke:0.3px #2d8fdd;">0</div>
<svg class="a" style="left:179.5px;top:451.3px;" width="15" height="15" viewBox="0 0 15 15"><rect x="0.7749999999999999" y="3.0" width="13.450000000000001" height="11.225000000000001" fill="none" stroke="#f0a020" stroke-width="0.95" rx="1"/><line x1="4.2" y1="0.5" x2="4.2" y2="4.8" stroke="#f0a020" stroke-width="0.95"/><line x1="10.799999999999999" y1="0.5" x2="10.799999999999999" y2="4.8" stroke="#f0a020" stroke-width="0.95"/><line x1="0.475" y1="6.3" x2="14.525" y2="6.3" stroke="#f0a020" stroke-width="0.76"/><line x1="0.95" y1="3.75" x2="14.05" y2="14.25" stroke="#f0a020" stroke-width="0.95"/></svg>
<div class="t" style="left:198.8px;top:452.9px;font-size:11.5px;color:#f0a020;font-weight:400;transform:scaleX(1.016);transform-origin:0 0;-webkit-text-stroke:0.3px #f0a020;">0</div>
<svg class="a" style="left:270.7px;top:447.3px;" width="20" height="20" viewBox="0 0 20 20"><circle cx="10.0" cy="10.0" r="10.0" fill="#f0a020"/><ellipse cx="10.2" cy="9.6" rx="5.8" ry="4.0" fill="none" stroke="#fff" stroke-width="1"/><path d="M6.8 12.6 L5.6 15.2 L9.0 13.4" fill="none" stroke="#fff" stroke-width="1"/></svg>
<div class="a" style="left:299.2px;top:444px;width:260.8px;height:29.5px;border:1.3px solid #2d8fdd;border-radius:3px;box-sizing:border-box;"></div>
<div class="t" style="left:364.4px;top:453.0px;font-size:13px;color:#2d8fdd;font-weight:400;transform:scaleX(0.982);transform-origin:0 0;-webkit-text-stroke:0.2px #2d8fdd;">Tue 13/04</div>
<svg class="a" style="left:434.35px;top:451.3px;" width="15" height="15" viewBox="0 0 15 15"><rect x="0.7749999999999999" y="3.0" width="13.450000000000001" height="11.225000000000001" fill="none" stroke="#2d8fdd" stroke-width="0.95" rx="1"/><line x1="4.2" y1="0.5" x2="4.2" y2="4.8" stroke="#2d8fdd" stroke-width="0.95"/><line x1="10.799999999999999" y1="0.5" x2="10.799999999999999" y2="4.8" stroke="#2d8fdd" stroke-width="0.95"/><line x1="0.475" y1="6.3" x2="14.525" y2="6.3" stroke="#2d8fdd" stroke-width="0.76"/></svg>
<div class="t" style="left:454.2px;top:452.9px;font-size:11.5px;color:#2d8fdd;font-weight:400;transform:scaleX(1.016);transform-origin:0 0;-webkit-text-stroke:0.3px #2d8fdd;">1</div>
<svg class="a" style="left:468.35px;top:451.3px;" width="15" height="15" viewBox="0 0 15 15"><rect x="0.7749999999999999" y="3.0" width="13.450000000000001" height="11.225000000000001" fill="none" stroke="#f0a020" stroke-width="0.95" rx="1"/><line x1="4.2" y1="0.5" x2="4.2" y2="4.8" stroke="#f0a020" stroke-width="0.95"/><line x1="10.799999999999999" y1="0.5" x2="10.799999999999999" y2="4.8" stroke="#f0a020" stroke-width="0.95"/><line x1="0.475" y1="6.3" x2="14.525" y2="6.3" stroke="#f0a020" stroke-width="0.76"/><line x1="0.95" y1="3.75" x2="14.05" y2="14.25" stroke="#f0a020" stroke-width="0.95"/></svg>
<div class="t" style="left:487.7px;top:452.9px;font-size:11.5px;color:#f0a020;font-weight:400;transform:scaleX(1.016);transform-origin:0 0;-webkit-text-stroke:0.3px #f0a020;">0</div>
<div class="a" style="left:565px;top:444px;width:265px;height:29.5px;border:1.3px solid #2d8fdd;border-radius:3px;box-sizing:border-box;"></div>
<div class="t" style="left:630.2px;top:453.0px;font-size:13px;color:#2d8fdd;font-weight:400;transform:scaleX(0.974);transform-origin:0 0;-webkit-text-stroke:0.2px #2d8fdd;">Wed 14/04</div>
<svg class="a" style="left:704.25px;top:451.3px;" width="15" height="15" viewBox="0 0 15 15"><rect x="0.7749999999999999" y="3.0" width="13.450000000000001" height="11.225000000000001" fill="none" stroke="#2d8fdd" stroke-width="0.95" rx="1"/><line x1="4.2" y1="0.5" x2="4.2" y2="4.8" stroke="#2d8fdd" stroke-width="0.95"/><line x1="10.799999999999999" y1="0.5" x2="10.799999999999999" y2="4.8" stroke="#2d8fdd" stroke-width="0.95"/><line x1="0.475" y1="6.3" x2="14.525" y2="6.3" stroke="#2d8fdd" stroke-width="0.76"/></svg>
<div class="t" style="left:724.0px;top:452.9px;font-size:11.5px;color:#2d8fdd;font-weight:400;transform:scaleX(1.016);transform-origin:0 0;-webkit-text-stroke:0.3px #2d8fdd;">0</div>
<svg class="a" style="left:738.25px;top:451.3px;" width="15" height="15" viewBox="0 0 15 15"><rect x="0.7749999999999999" y="3.0" width="13.450000000000001" height="11.225000000000001" fill="none" stroke="#f0a020" stroke-width="0.95" rx="1"/><line x1="4.2" y1="0.5" x2="4.2" y2="4.8" stroke="#f0a020" stroke-width="0.95"/><line x1="10.799999999999999" y1="0.5" x2="10.799999999999999" y2="4.8" stroke="#f0a020" stroke-width="0.95"/><line x1="0.475" y1="6.3" x2="14.525" y2="6.3" stroke="#f0a020" stroke-width="0.76"/><line x1="0.95" y1="3.75" x2="14.05" y2="14.25" stroke="#f0a020" stroke-width="0.95"/></svg>
<div class="t" style="left:757.5px;top:452.9px;font-size:11.5px;color:#f0a020;font-weight:400;transform:scaleX(1.016);transform-origin:0 0;-webkit-text-stroke:0.3px #f0a020;">0</div>
<div class="a" style="left:835px;top:444px;width:260px;height:29.5px;border:1.3px solid #2d8fdd;border-radius:3px;box-sizing:border-box;"></div>
<div class="t" style="left:899.2px;top:453.0px;font-size:13px;color:#2d8fdd;font-weight:400;transform:scaleX(0.991);transform-origin:0 0;-webkit-text-stroke:0.2px #2d8fdd;">Thu 15/04</div>
<svg class="a" style="left:970.25px;top:451.3px;" width="15" height="15" viewBox="0 0 15 15"><rect x="0.7749999999999999" y="3.0" width="13.450000000000001" height="11.225000000000001" fill="none" stroke="#2d8fdd" stroke-width="0.95" rx="1"/><line x1="4.2" y1="0.5" x2="4.2" y2="4.8" stroke="#2d8fdd" stroke-width="0.95"/><line x1="10.799999999999999" y1="0.5" x2="10.799999999999999" y2="4.8" stroke="#2d8fdd" stroke-width="0.95"/><line x1="0.475" y1="6.3" x2="14.525" y2="6.3" stroke="#2d8fdd" stroke-width="0.76"/></svg>
<div class="t" style="left:990.0px;top:452.9px;font-size:11.5px;color:#2d8fdd;font-weight:400;transform:scaleX(1.016);transform-origin:0 0;-webkit-text-stroke:0.3px #2d8fdd;">0</div>
<svg class="a" style="left:1004.25px;top:451.3px;" width="15" height="15" viewBox="0 0 15 15"><rect x="0.7749999999999999" y="3.0" width="13.450000000000001" height="11.225000000000001" fill="none" stroke="#f0a020" stroke-width="0.95" rx="1"/><line x1="4.2" y1="0.5" x2="4.2" y2="4.8" stroke="#f0a020" stroke-width="0.95"/><line x1="10.799999999999999" y1="0.5" x2="10.799999999999999" y2="4.8" stroke="#f0a020" stroke-width="0.95"/><line x1="0.475" y1="6.3" x2="14.525" y2="6.3" stroke="#f0a020" stroke-width="0.76"/><line x1="0.95" y1="3.75" x2="14.05" y2="14.25" stroke="#f0a020" stroke-width="0.95"/></svg>
<div class="t" style="left:1023.5px;top:452.9px;font-size:11.5px;color:#f0a020;font-weight:400;transform:scaleX(1.016);transform-origin:0 0;-webkit-text-stroke:0.3px #f0a020;">0</div>
<div class="a" style="left:1100px;top:444px;width:260px;height:29.5px;border:1.3px solid #2d8fdd;border-radius:3px;box-sizing:border-box;"></div>
<div class="t" style="left:1167.2px;top:453.0px;font-size:13px;color:#2d8fdd;font-weight:400;transform:scaleX(1.014);transform-origin:0 0;-webkit-text-stroke:0.2px #2d8fdd;">Fri 16/04</div>
<svg class="a" style="left:1232.25px;top:451.3px;" width="15" height="15" viewBox="0 0 15 15"><rect x="0.7749999999999999" y="3.0" width="13.450000000000001" height="11.225000000000001" fill="none" stroke="#2d8fdd" stroke-width="0.95" rx="1"/><line x1="4.2" y1="0.5" x2="4.2" y2="4.8" stroke="#2d8fdd" stroke-width="0.95"/><line x1="10.799999999999999" y1="0.5" x2="10.799999999999999" y2="4.8" stroke="#2d8fdd" stroke-width="0.95"/><line x1="0.475" y1="6.3" x2="14.525" y2="6.3" stroke="#2d8fdd" stroke-width="0.76"/></svg>
<div class="t" style="left:1252.0px;top:452.9px;font-size:11.5px;color:#2d8fdd;font-weight:400;transform:scaleX(1.016);transform-origin:0 0;-webkit-text-stroke:0.3px #2d8fdd;">0</div>
<svg class="a" style="left:1266.25px;top:451.3px;" width="15" height="15" viewBox="0 0 15 15"><rect x="0.7749999999999999" y="3.0" width="13.450000000000001" height="11.225000000000001" fill="none" stroke="#f0a020" stroke-width="0.95" rx="1"/><line x1="4.2" y1="0.5" x2="4.2" y2="4.8" stroke="#f0a020" stroke-width="0.95"/><line x1="10.799999999999999" y1="0.5" x2="10.799999999999999" y2="4.8" stroke="#f0a020" stroke-width="0.95"/><line x1="0.475" y1="6.3" x2="14.525" y2="6.3" stroke="#f0a020" stroke-width="0.76"/><line x1="0.95" y1="3.75" x2="14.05" y2="14.25" stroke="#f0a020" stroke-width="0.95"/></svg>
<div class="t" style="left:1285.5px;top:452.9px;font-size:11.5px;color:#f0a020;font-weight:400;transform:scaleX(1.016);transform-origin:0 0;-webkit-text-stroke:0.3px #f0a020;">0</div>
<div class="a" style="left:1365px;top:444px;width:261.5999999999999px;height:29.5px;border:1.3px solid #2d8fdd;border-radius:3px;box-sizing:border-box;"></div>
<div class="t" style="left:1431.5px;top:453.0px;font-size:13px;color:#2d8fdd;font-weight:400;transform:scaleX(0.988);transform-origin:0 0;-webkit-text-stroke:0.2px #2d8fdd;">Sat 17/04</div>
<svg class="a" style="left:1499.55px;top:451.3px;" width="15" height="15" viewBox="0 0 15 15"><rect x="0.7749999999999999" y="3.0" width="13.450000000000001" height="11.225000000000001" fill="none" stroke="#2d8fdd" stroke-width="0.95" rx="1"/><line x1="4.2" y1="0.5" x2="4.2" y2="4.8" stroke="#2d8fdd" stroke-width="0.95"/><line x1="10.799999999999999" y1="0.5" x2="10.799999999999999" y2="4.8" stroke="#2d8fdd" stroke-width="0.95"/><line x1="0.475" y1="6.3" x2="14.525" y2="6.3" stroke="#2d8fdd" stroke-width="0.76"/></svg>
<div class="t" style="left:1519.3px;top:452.9px;font-size:11.5px;color:#2d8fdd;font-weight:400;transform:scaleX(1.016);transform-origin:0 0;-webkit-text-stroke:0.3px #2d8fdd;">0</div>
<svg class="a" style="left:1533.55px;top:451.3px;" width="15" height="15" viewBox="0 0 15 15"><rect x="0.7749999999999999" y="3.0" width="13.450000000000001" height="11.225000000000001" fill="none" stroke="#f0a020" stroke-width="0.95" rx="1"/><line x1="4.2" y1="0.5" x2="4.2" y2="4.8" stroke="#f0a020" stroke-width="0.95"/><line x1="10.799999999999999" y1="0.5" x2="10.799999999999999" y2="4.8" stroke="#f0a020" stroke-width="0.95"/><line x1="0.475" y1="6.3" x2="14.525" y2="6.3" stroke="#f0a020" stroke-width="0.76"/><line x1="0.95" y1="3.75" x2="14.05" y2="14.25" stroke="#f0a020" stroke-width="0.95"/></svg>
<div class="t" style="left:1552.8px;top:452.9px;font-size:11.5px;color:#f0a020;font-weight:400;transform:scaleX(1.016);transform-origin:0 0;-webkit-text-stroke:0.3px #f0a020;">0</div>
<div class="a" style="left:1631.3px;top:444px;width:261.29999999999995px;height:29.5px;border:1.3px solid #2d8fdd;border-radius:3px;box-sizing:border-box;"></div>
<div class="t" style="left:1695.7px;top:453.0px;font-size:13px;color:#2d8fdd;font-weight:400;-webkit-text-stroke:0.2px #2d8fdd;">Sun 18/04</div>
<svg class="a" style="left:1767.6999999999998px;top:451.3px;" width="15" height="15" viewBox="0 0 15 15"><rect x="0.7749999999999999" y="3.0" width="13.450000000000001" height="11.225000000000001" fill="none" stroke="#2d8fdd" stroke-width="0.95" rx="1"/><line x1="4.2" y1="0.5" x2="4.2" y2="4.8" stroke="#2d8fdd" stroke-width="0.95"/><line x1="10.799999999999999" y1="0.5" x2="10.799999999999999" y2="4.8" stroke="#2d8fdd" stroke-width="0.95"/><line x1="0.475" y1="6.3" x2="14.525" y2="6.3" stroke="#2d8fdd" stroke-width="0.76"/></svg>
<div class="t" style="left:1787.5px;top:452.9px;font-size:11.5px;color:#2d8fdd;font-weight:400;transform:scaleX(1.016);transform-origin:0 0;-webkit-text-stroke:0.3px #2d8fdd;">1</div>
<svg class="a" style="left:1801.6999999999998px;top:451.3px;" width="15" height="15" viewBox="0 0 15 15"><rect x="0.7749999999999999" y="3.0" width="13.450000000000001" height="11.225000000000001" fill="none" stroke="#f0a020" stroke-width="0.95" rx="1"/><line x1="4.2" y1="0.5" x2="4.2" y2="4.8" stroke="#f0a020" stroke-width="0.95"/><line x1="10.799999999999999" y1="0.5" x2="10.799999999999999" y2="4.8" stroke="#f0a020" stroke-width="0.95"/><line x1="0.475" y1="6.3" x2="14.525" y2="6.3" stroke="#f0a020" stroke-width="0.76"/><line x1="0.95" y1="3.75" x2="14.05" y2="14.25" stroke="#f0a020" stroke-width="0.95"/></svg>
<div class="t" style="left:1821.0px;top:452.9px;font-size:11.5px;color:#f0a020;font-weight:400;transform:scaleX(1.016);transform-origin:0 0;-webkit-text-stroke:0.3px #f0a020;">0</div>
<div class="a" style="left:7px;top:477px;width:287px;height:25.69999999999999px;background:#343a40;"></div>
<div class="a" style="left:298px;top:477px;width:1594.5px;height:25.69999999999999px;background:#343a40;"></div>
<div class="t" style="left:18.0px;top:483.6px;font-size:12px;color:#fff;font-weight:400;transform:scaleX(1.106);transform-origin:0 0;">Employee</div>
<div class="t" style="left:309.0px;top:484.4px;font-size:12px;color:#fff;font-weight:400;transform:scaleX(1.089);transform-origin:0 0;">Position</div>
<div class="a" style="left:7px;top:507px;width:1885.5px;height:1px;background:#e4e6e8;"></div>
<div class="a" style="left:7px;top:573px;width:1885.5px;height:1px;background:#e4e6e8;"></div>
<div class="a" style="left:7px;top:641px;width:1885.5px;height:1px;background:#e4e6e8;"></div>
<div class="a" style="left:7px;top:709px;width:1885.5px;height:1px;background:#e4e6e8;"></div>
<div class="a" style="left:7px;top:786px;width:1885.5px;height:1px;background:#e4e6e8;"></div>
<div class="t" style="left:19.0px;top:515.1px;font-size:16px;color:#2d8fdd;font-weight:700;transform:scaleX(1.111);transform-origin:0 0;">Anna-May Visa</div>
<div class="a" style="left:149.8px;top:517.6px;width:54.0px;height:15.600000000000023px;background:#dadde0;border-radius:8px;"></div>
<div class="t" style="left:176.8px;top:518.9px;font-size:11px;color:#111;font-weight:700;transform:translateX(-50%) scaleX(1.12);">Casual</div>
<svg class="a" style="left:24px;top:537.1px;" width="12" height="12" viewBox="0 0 12 12"><rect x="0.6" y="2.6" width="10.8" height="9.2" fill="none" stroke="#333" stroke-width="1.1"/><line x1="3" y1="0.5" x2="3" y2="3.5" stroke="#333" stroke-width="1"/><line x1="9" y1="0.5" x2="9" y2="3.5" stroke="#333" stroke-width="1"/><line x1="0.6" y1="4.6" x2="11.4" y2="4.6" stroke="#333" stroke-width="0.8"/><path d="M3.6 8 L5.3 9.6 L8.6 6.2" fill="none" stroke="#333" stroke-width="0.9"/></svg>
<div class="t" style="left:40.5px;top:536.8px;font-size:12.5px;color:#222;font-weight:400;transform:scaleX(1.075);transform-origin:0 0;"><b>7.5</b> hrs approved</div>
<svg class="a" style="left:24px;top:552.5px;" width="12" height="12" viewBox="0 0 12 12"><rect x="0.6" y="1.6" width="10.8" height="10" fill="none" stroke="#444" stroke-width="1.1"/><line x1="3" y1="0.3" x2="3" y2="2.5" stroke="#444" stroke-width="1"/><line x1="9" y1="0.3" x2="9" y2="2.5" stroke="#444" stroke-width="1"/><path d="M3 7 H8.2 M6.2 4.8 L8.4 7 L6.2 9.2 M5 4.5 Q3 4.8 3 7" fill="none" stroke="#444" stroke-width="1.1"/></svg>
<div class="t" style="left:40.5px;top:553.0px;font-size:12.5px;color:#222;font-weight:400;transform:scaleX(1.078);transform-origin:0 0;"><b>0</b> leave hrs approved</div>
<div class="t" style="left:309.0px;top:532.7px;font-size:16px;color:#1e1e1e;font-weight:400;transform:scaleX(1.050);transform-origin:0 0;-webkit-text-stroke:0.15px #1e1e1e;">Customer Service</div>
<div class="t" style="left:19.0px;top:583.2px;font-size:16px;color:#2d8fdd;font-weight:700;transform:scaleX(1.019);transform-origin:0 0;">Belinda Love</div>
<div class="a" style="left:125.3px;top:585.7px;width:54.500000000000014px;height:15.600000000000023px;background:#dadde0;border-radius:8px;"></div>
<div class="t" style="left:152.6px;top:587.0px;font-size:11px;color:#111;font-weight:700;transform:translateX(-50%) scaleX(1.12);">Casual</div>
<svg class="a" style="left:24px;top:605.2px;" width="12" height="12" viewBox="0 0 12 12"><rect x="0.6" y="2.6" width="10.8" height="9.2" fill="none" stroke="#7a7a7a" stroke-width="1.1"/><line x1="3" y1="0.5" x2="3" y2="3.5" stroke="#7a7a7a" stroke-width="1"/><line x1="9" y1="0.5" x2="9" y2="3.5" stroke="#7a7a7a" stroke-width="1"/><line x1="0.6" y1="4.6" x2="11.4" y2="4.6" stroke="#7a7a7a" stroke-width="0.8"/><path d="M3.6 8 L5.3 9.6 L8.6 6.2" fill="none" stroke="#7a7a7a" stroke-width="0.9"/></svg>
<div class="t" style="left:40.5px;top:604.9px;font-size:12.5px;color:#6a6a6a;font-weight:400;transform:scaleX(1.083);transform-origin:0 0;"><b>0</b> hrs approved</div>
<svg class="a" style="left:24px;top:620.6px;" width="12" height="12" viewBox="0 0 12 12"><rect x="0.6" y="1.6" width="10.8" height="10" fill="none" stroke="#8e3fb0" stroke-width="1.1"/><line x1="3" y1="0.3" x2="3" y2="2.5" stroke="#8e3fb0" stroke-width="1"/><line x1="9" y1="0.3" x2="9" y2="2.5" stroke="#8e3fb0" stroke-width="1"/><path d="M3 7 H8.2 M6.2 4.8 L8.4 7 L6.2 9.2 M5 4.5 Q3 4.8 3 7" fill="none" stroke="#8e3fb0" stroke-width="1.1"/></svg>
<div class="t" style="left:40.5px;top:621.1px;font-size:12.5px;color:#6a6a6a;font-weight:400;transform:scaleX(1.078);transform-origin:0 0;"><b>0</b> leave hrs approved</div>
<div class="t" style="left:309.0px;top:598.6px;font-size:16px;color:#1e1e1e;font-weight:400;transform:scaleX(1.078);transform-origin:0 0;-webkit-text-stroke:0.15px #1e1e1e;">Waiter</div>
<div class="t" style="left:19.0px;top:651.9px;font-size:16px;color:#2d8fdd;font-weight:700;transform:scaleX(1.056);transform-origin:0 0;">Billy-Bob Visa</div>
<div class="a" style="left:136.5px;top:654.4px;width:53.900000000000006px;height:15.600000000000023px;background:#dadde0;border-radius:8px;"></div>
<div class="t" style="left:163.4px;top:655.7px;font-size:11px;color:#111;font-weight:700;transform:translateX(-50%) scaleX(1.12);">Casual</div>
<svg class="a" style="left:24px;top:673.9px;" width="12" height="12" viewBox="0 0 12 12"><rect x="0.6" y="2.6" width="10.8" height="9.2" fill="none" stroke="#7a7a7a" stroke-width="1.1"/><line x1="3" y1="0.5" x2="3" y2="3.5" stroke="#7a7a7a" stroke-width="1"/><line x1="9" y1="0.5" x2="9" y2="3.5" stroke="#7a7a7a" stroke-width="1"/><line x1="0.6" y1="4.6" x2="11.4" y2="4.6" stroke="#7a7a7a" stroke-width="0.8"/><path d="M3.6 8 L5.3 9.6 L8.6 6.2" fill="none" stroke="#7a7a7a" stroke-width="0.9"/></svg>
<div class="t" style="left:40.5px;top:673.6px;font-size:12.5px;color:#6a6a6a;font-weight:400;transform:scaleX(1.083);transform-origin:0 0;"><b>0</b> hrs approved</div>
<svg class="a" style="left:24px;top:689.3px;" width="12" height="12" viewBox="0 0 12 12"><rect x="0.6" y="1.6" width="10.8" height="10" fill="none" stroke="#8e3fb0" stroke-width="1.1"/><line x1="3" y1="0.3" x2="3" y2="2.5" stroke="#8e3fb0" stroke-width="1"/><line x1="9" y1="0.3" x2="9" y2="2.5" stroke="#8e3fb0" stroke-width="1"/><path d="M3 7 H8.2 M6.2 4.8 L8.4 7 L6.2 9.2 M5 4.5 Q3 4.8 3 7" fill="none" stroke="#8e3fb0" stroke-width="1.1"/></svg>
<div class="t" style="left:40.5px;top:689.8px;font-size:12.5px;color:#6a6a6a;font-weight:400;transform:scaleX(1.078);transform-origin:0 0;"><b>0</b> leave hrs approved</div>
<div class="t" style="left:309.0px;top:666.5px;font-size:16px;color:#1e1e1e;font-weight:400;transform:scaleX(1.050);transform-origin:0 0;-webkit-text-stroke:0.15px #1e1e1e;">Customer Service</div>
<div class="t" style="left:19.0px;top:723.3px;font-size:16px;color:#2d8fdd;font-weight:700;transform:scaleX(1.058);transform-origin:0 0;">Dan Mees</div>
<div class="a" style="left:102.3px;top:725.8px;width:69.3px;height:15.600000000000023px;background:#dadde0;border-radius:8px;"></div>
<div class="t" style="left:136.9px;top:727.1px;font-size:11px;color:#111;font-weight:700;transform:translateX(-50%) scaleX(1.12);">Full-Time</div>
<svg class="a" style="left:24px;top:745.3px;" width="12" height="12" viewBox="0 0 12 12"><rect x="0.6" y="2.6" width="10.8" height="9.2" fill="none" stroke="#7a7a7a" stroke-width="1.1"/><line x1="3" y1="0.5" x2="3" y2="3.5" stroke="#7a7a7a" stroke-width="1"/><line x1="9" y1="0.5" x2="9" y2="3.5" stroke="#7a7a7a" stroke-width="1"/><line x1="0.6" y1="4.6" x2="11.4" y2="4.6" stroke="#7a7a7a" stroke-width="0.8"/><path d="M3.6 8 L5.3 9.6 L8.6 6.2" fill="none" stroke="#7a7a7a" stroke-width="0.9"/></svg>
<div class="t" style="left:40.5px;top:745.0px;font-size:12.5px;color:#6a6a6a;font-weight:400;transform:scaleX(1.083);transform-origin:0 0;"><b>0</b> hrs approved</div>
<svg class="a" style="left:24px;top:760.6999999999999px;" width="12" height="12" viewBox="0 0 12 12"><rect x="0.6" y="1.6" width="10.8" height="10" fill="none" stroke="#8e3fb0" stroke-width="1.1"/><line x1="3" y1="0.3" x2="3" y2="2.5" stroke="#8e3fb0" stroke-width="1"/><line x1="9" y1="0.3" x2="9" y2="2.5" stroke="#8e3fb0" stroke-width="1"/><path d="M3 7 H8.2 M6.2 4.8 L8.4 7 L6.2 9.2 M5 4.5 Q3 4.8 3 7" fill="none" stroke="#8e3fb0" stroke-width="1.1"/></svg>
<div class="t" style="left:40.5px;top:761.2px;font-size:12.5px;color:#6a6a6a;font-weight:400;transform:scaleX(1.078);transform-origin:0 0;"><b>0</b> leave hrs approved</div>
<div class="t" style="left:309.0px;top:738.9px;font-size:16px;color:#1e1e1e;font-weight:400;-webkit-text-stroke:0.15px #1e1e1e;">Sioux Chef</div>
<div class="t" style="right:433.0px;top:518.7px;font-size:16px;color:#5aab2c;font-weight:400;-webkit-text-stroke:0.25px #5aab2c;transform:scaleX(1.07);transform-origin:100% 0;">10:00 am - 5:00 pm</div>
<div class="t" style="right:433.5px;top:542.8px;font-size:13px;color:#5aab2c;font-weight:400;">30 min Break</div>
<div class="t" style="left:1727.5px;top:523.5px;font-size:16px;color:#5aab2c;font-weight:700;transform:scaleX(1.042);transform-origin:0 0;">Pre-approved</div>
<svg class="a" style="left:1841px;top:522.5px;" width="17" height="16" viewBox="0 0 17 16"><path d="M2 14.4 L2.6 11 L12.6 1 L15.6 4 L5.6 14 Z M11 2.6 L14 5.6" fill="none" stroke="#5aab2c" stroke-width="1.1" stroke-linejoin="round"/></svg>
<div class="t" style="left:1722.5px;top:543.7px;font-size:11px;color:#5aab2c;font-weight:700;transform:scaleX(1.064);transform-origin:0 0;">foundU Holdings - 13/04</div>
<svg class="a" style="left:1867px;top:530.8px;" width="14" height="14" viewBox="0 0 14 14"><circle cx="7" cy="7" r="6.2" fill="none" stroke="#b5b5b5" stroke-width="1.7"/></svg>
<div class="t" style="right:433.0px;top:586.5px;font-size:16px;color:#1e1e1e;font-weight:400;-webkit-text-stroke:0.25px #1e1e1e;transform:scaleX(1.07);transform-origin:100% 0;">10:00 am - 5:00 pm</div>
<div class="t" style="right:433.5px;top:610.6px;font-size:13px;color:#2a2a2a;font-weight:400;">30 min Break</div>
<svg class="a" style="left:1729px;top:586.5px;" width="40" height="40" viewBox="0 0 40 40"><circle cx="20" cy="20" r="19.1" fill="none" stroke="#6fb43f" stroke-width="1.9"/><path d="M13.2 21 L17.8 25.6 L27.6 15.6" fill="none" stroke="#6fb43f" stroke-width="1.8" stroke-linecap="round" stroke-linejoin="round"/></svg>
<svg class="a" style="left:1773px;top:586.5px;" width="40" height="40" viewBox="0 0 40 40"><circle cx="20" cy="20" r="19.1" fill="none" stroke="#d9342b" stroke-width="1.9"/><path d="M14.4 14.4 L25.6 25.6 M25.6 14.4 L14.4 25.6" fill="none" stroke="#d9342b" stroke-width="1.8"/></svg>
<svg class="a" style="left:1817px;top:586.5px;" width="40" height="40" viewBox="0 0 40 40"><circle cx="20" cy="20" r="19.1" fill="none" stroke="#2d8fdd" stroke-width="1.9"/><path d="M15 22.8 L23.8 14 L26.4 16.6 L17.6 25.4 L14.8 25.6 Z" fill="none" stroke="#2d8fdd" stroke-width="1.4" stroke-linejoin="round"/></svg>
<svg class="a" style="left:1867px;top:599.5px;" width="14" height="14" viewBox="0 0 14 14"><circle cx="7" cy="7" r="6.2" fill="none" stroke="#b5b5b5" stroke-width="1.7"/></svg>
<div class="t" style="right:433.0px;top:655.1px;font-size:16px;color:#1e1e1e;font-weight:400;-webkit-text-stroke:0.25px #1e1e1e;transform:scaleX(1.07);transform-origin:100% 0;">10:00 am - 5:00 pm</div>
<div class="t" style="right:420.4px;top:679.2px;font-size:13px;color:#2a2a2a;font-weight:400;">1 hr 00 min Break</div>
<svg class="a" style="left:1729px;top:655px;" width="40" height="40" viewBox="0 0 40 40"><circle cx="20" cy="20" r="19.1" fill="none" stroke="#6fb43f" stroke-width="1.9"/><path d="M13.2 21 L17.8 25.6 L27.6 15.6" fill="none" stroke="#6fb43f" stroke-width="1.8" stroke-linecap="round" stroke-linejoin="round"/></svg>
<svg class="a" style="left:1773px;top:655px;" width="40" height="40" viewBox="0 0 40 40"><circle cx="20" cy="20" r="19.1" fill="none" stroke="#d9342b" stroke-width="1.9"/><path d="M14.4 14.4 L25.6 25.6 M25.6 14.4 L14.4 25.6" fill="none" stroke="#d9342b" stroke-width="1.8"/></svg>
<svg class="a" style="left:1817px;top:655px;" width="40" height="40" viewBox="0 0 40 40"><circle cx="20" cy="20" r="19.1" fill="none" stroke="#2d8fdd" stroke-width="1.9"/><path d="M15 22.8 L23.8 14 L26.4 16.6 L17.6 25.4 L14.8 25.6 Z" fill="none" stroke="#2d8fdd" stroke-width="1.4" stroke-linejoin="round"/></svg>
<svg class="a" style="left:1867px;top:668px;" width="14" height="14" viewBox="0 0 14 14"><circle cx="7" cy="7" r="6.2" fill="none" stroke="#b5b5b5" stroke-width="1.7"/></svg>
<div class="t" style="left:1722.5px;top:766.4px;font-size:11px;color:#222;font-weight:400;transform:scaleX(1.130);transform-origin:0 0;-webkit-text-stroke:0.2px #222;">foundU Holdings - 14/04</div>
<div class="t" style="right:428.0px;top:727.9px;font-size:16px;color:#1e1e1e;font-weight:400;-webkit-text-stroke:0.25px #1e1e1e;transform:scaleX(1.07);transform-origin:100% 0;">10:00 am - 4:00 pm</div>
<div class="t" style="right:432.0px;top:752.0px;font-size:13px;color:#2a2a2a;font-weight:400;">30 min Break</div>
<svg class="a" style="left:1729px;top:721px;" width="40" height="40" viewBox="0 0 40 40"><circle cx="20" cy="20" r="19.1" fill="none" stroke="#6fb43f" stroke-width="1.9"/><path d="M13.2 21 L17.8 25.6 L27.6 15.6" fill="none" stroke="#6fb43f" stroke-width="1.8" stroke-linecap="round" stroke-linejoin="round"/></svg>
<svg class="a" style="left:1773px;top:721px;" width="40" height="40" viewBox="0 0 40 40"><circle cx="20" cy="20" r="19.1" fill="none" stroke="#d9342b" stroke-width="1.9"/><path d="M14.4 14.4 L25.6 25.6 M25.6 14.4 L14.4 25.6" fill="none" stroke="#d9342b" stroke-width="1.8"/></svg>
<svg class="a" style="left:1817px;top:721px;" width="40" height="40" viewBox="0 0 40 40"><circle cx="20" cy="20" r="19.1" fill="none" stroke="#2d8fdd" stroke-width="1.9"/><path d="M15 22.8 L23.8 14 L26.4 16.6 L17.6 25.4 L14.8 25.6 Z" fill="none" stroke="#2d8fdd" stroke-width="1.4" stroke-linejoin="round"/></svg>
<svg class="a" style="left:1867px;top:740px;" width="14" height="14" viewBox="0 0 14 14"><circle cx="7" cy="7" r="6.2" fill="none" stroke="#b5b5b5" stroke-width="1.7"/></svg>
<div class="a" style="left:5.5px;top:797.7px;width:176.1px;height:29.600000000000023px;border:1px solid #b0b0b0;border-radius:4px;box-sizing:border-box;box-shadow:0 1px 1px rgba(0,0,0,0.25);"></div>
<div class="a" style="left:186.4px;top:797.7px;width:175.9px;height:29.600000000000023px;border:1px solid #b0b0b0;border-radius:4px;box-sizing:border-box;box-shadow:0 1px 1px rgba(0,0,0,0.25);"></div>
<svg class="a" style="left:85.5px;top:803.7px;" width="17" height="16" viewBox="0 0 17 16"><circle cx="7.6" cy="4.6" r="3.7" fill="none" stroke="#222" stroke-width="1.1"/><path d="M1 14.6 Q1.4 9.6 7.4 9.6 Q9 9.6 10 10" fill="none" stroke="#222" stroke-width="1.1"/><path d="M1 14.6 L10 14.6" stroke="#222" stroke-width="1.1"/><circle cx="12.6" cy="12.4" r="3.2" fill="none" stroke="#222" stroke-width="1"/><path d="M12.6 10.6 V14.2 M10.8 12.4 H14.4" stroke="#222" stroke-width="1"/></svg>
<svg class="a" style="left:266px;top:804.7px;" width="16" height="16" viewBox="0 0 16 16"><path d="M8 1 V15 M1 8 H15" stroke="#333" stroke-width="1.2"/></svg>
</div></div>
<div class="a" style="left:0px;top:52px;width:1909px;height:844px;background:rgba(0,0,0,0.45);z-index:10;"></div>
<div class="a" style="left:0px;top:52px;width:1909px;height:14px;background:linear-gradient(rgba(255,255,255,0.2),rgba(255,255,255,0));z-index:11;"></div>
<div class="a" style="left:500px;top:132px;width:900px;height:684.5px;background:#fff;box-shadow:0 5px 15px rgba(0,0,0,0.35);z-index:20;"></div>
<div class="a" style="left:500px;top:132px;width:900px;height:50px;background:#2d8fdd;z-index:20;"></div>
<div class="t" style="left:515.0px;top:148.0px;font-size:20px;color:#fff;font-weight:700;z-index:20;">Edit Shift</div>
<svg class="a" style="left:1375px;top:149.5px;z-index:20;" width="15" height="15" viewBox="0 0 15 15"><path d="M1.5 1.5 L13.5 13.5 M13.5 1.5 L1.5 13.5" stroke="#fff" stroke-width="2.6"/></svg>
<div class="t" style="left:515.0px;top:193.5px;font-size:16px;color:#2d8fdd;font-weight:700;z-index:20;">Dan Mees</div>
<div class="t" style="left:515.0px;top:215.1px;font-size:14px;color:#222;font-weight:700;z-index:20;">Roster Name</div>
<div class="t" style="left:515.0px;top:234.9px;font-size:14px;color:#333;font-weight:400;z-index:20;">Bar</div>
<svg class="a" style="left:923px;top:194px;z-index:20;" width="15" height="14" viewBox="0 0 15 14"><rect x="0.6" y="1.8" width="13.8" height="11.6" rx="1" fill="none" stroke="#555" stroke-width="1.1"/><line x1="0.6" y1="4.6" x2="14.4" y2="4.6" stroke="#555" stroke-width="1"/><path d="M3.6 0.4 V3 M11.4 0.4 V3" stroke="#555" stroke-width="1"/><path d="M3 7 V11.6 M5 7 V11.6 M7 7 V11.6 M9 7 V11.6 M11 7 V11.6" stroke="#777" stroke-width="0.9"/></svg>
<div class="t" style="left:941.5px;top:195.1px;font-size:14px;color:#222;font-weight:400;z-index:20;">Wednesday - 14/04</div>
<svg class="a" style="left:923px;top:214px;z-index:20;" width="15" height="14" viewBox="0 0 15 14"><circle cx="7" cy="7" r="6.3" fill="none" stroke="#444" stroke-width="1"/><path d="M4.2 5.6 L7 7.6 L9.8 5.6" fill="none" stroke="#444" stroke-width="0.9"/></svg>
<div class="t" style="left:942.0px;top:215.0px;font-size:14px;color:#222;font-weight:400;z-index:20;">10:00 am - 4:00 pm</div>
<div class="t" style="left:923.0px;top:235.1px;font-size:14px;color:#222;font-weight:400;z-index:20;">30 min Break</div>
<div class="t" style="left:515.0px;top:298.0px;font-size:13px;color:#444;font-weight:700;z-index:20;">Shift Start Time</div>
<div class="t" style="left:965.0px;top:298.0px;font-size:13px;color:#444;font-weight:700;z-index:20;">Shift End Time</div>
<div class="a" style="left:515px;top:317px;width:300px;height:38px;border:1px solid #7a7a7a;border-radius:2px;box-sizing:border-box;background:#fff;box-shadow:0 4px 8px rgba(0,0,0,0.04);z-index:20;"></div>
<div class="a" style="left:965px;top:317px;width:300px;height:38px;border:1px solid #7a7a7a;border-radius:2px;box-sizing:border-box;background:#fff;box-shadow:0 4px 8px rgba(0,0,0,0.04);z-index:20;"></div>
<div class="t" style="left:520.5px;top:328.0px;font-size:15px;color:#333;font-weight:400;transform:scaleX(1.007);transform-origin:0 0;z-index:20;">10:00 am</div>
<div class="t" style="left:970.5px;top:328.0px;font-size:15px;color:#333;font-weight:400;transform:scaleX(1.033);transform-origin:0 0;z-index:20;">4:00 pm</div>
<div class="t" style="left:515.0px;top:376.3px;font-size:13px;color:#444;font-weight:700;z-index:20;">Date</div>
<div class="t" style="left:965.0px;top:376.3px;font-size:13px;color:#444;font-weight:700;z-index:20;">Break</div>
<div class="a" style="left:515px;top:395px;width:300px;height:38px;box-shadow:0 6px 6px -4px rgba(0,0,0,0.05);background:#fff;z-index:20;"></div>
<div class="t" style="left:520.0px;top:406.0px;font-size:15px;color:#9a9a9a;font-weight:400;transform:scaleX(1.012);transform-origin:0 0;z-index:20;">14/04/2021</div>
<div class="a" style="left:965px;top:395px;width:300px;height:38px;border:1px solid #7a7a7a;border-radius:2px;box-sizing:border-box;background:#fff;box-shadow:0 4px 8px rgba(0,0,0,0.04);z-index:20;"></div>
<div class="t" style="left:970.5px;top:405.9px;font-size:15px;color:#333;font-weight:400;transform:scaleX(1.062);transform-origin:0 0;z-index:20;">30m</div>
<div class="t" style="left:515.0px;top:453.7px;font-size:15px;color:#444;font-weight:700;z-index:20;">No Hours Worked</div>
<div class="a" style="left:646px;top:454px;width:32px;height:15px;background:#6b6b6b;border-radius:8px;z-index:20;"></div>
<div class="a" style="left:648.5px;top:456px;width:11.0px;height:11px;background:#fff;border-radius:50%;z-index:20;"></div>
<div class="t" style="left:515.0px;top:485.3px;font-size:13px;color:#444;font-weight:700;z-index:20;">Roster</div>
<div class="a" style="left:515px;top:504.5px;width:300px;height:39.0px;border:1px solid #ececec;border-radius:3px;box-sizing:border-box;box-shadow:0 5px 10px rgba(0,0,0,0.04);background:#fff;z-index:20;"></div>
<div class="t" style="left:533.0px;top:515.7px;font-size:15px;color:#333;font-weight:400;transform:scaleX(0.985);transform-origin:0 0;z-index:20;">Bar</div>
<svg class="a" style="left:789.5px;top:522px;z-index:20;" width="10" height="7" viewBox="0 0 10 7"><path d="M1.2 1.2 L5 5 L8.8 1.2" fill="none" stroke="#333" stroke-width="1.8"/></svg>
<div class="t" style="left:515.0px;top:565.6px;font-size:13px;color:#444;font-weight:700;z-index:20;">Position</div>
<div class="a" style="left:515px;top:584px;width:300px;height:106px;border:1px solid #2d8fdd;border-radius:4px;box-sizing:border-box;background:#fff;z-index:20;"></div>
<div class="t" style="left:533.0px;top:595.2px;font-size:15px;color:#a5a5a5;font-weight:400;z-index:20;">Sioux Chef</div>
<svg class="a" style="left:789.5px;top:599.5px;z-index:20;" width="10" height="7" viewBox="0 0 10 7"><path d="M1.2 5.6 L5 1.8 L8.8 5.6" fill="none" stroke="#333" stroke-width="1.8"/></svg>
<div class="a" style="left:515px;top:674.5px;width:870px;height:46.0px;background:#f9f9f9;border-top:1px solid #ececec;box-sizing:border-box;z-index:20;"></div>
<div class="a" style="left:515px;top:719.5px;width:870px;height:1.5px;background:#2d8fdd;z-index:20;"></div>
<div class="a" style="left:817.5px;top:674.5px;width:1.0px;height:45.5px;background:#e6e6e6;z-index:20;"></div>
<div class="a" style="left:1085.5px;top:674.5px;width:1.0px;height:45.5px;background:#e6e6e6;z-index:20;"></div>
<div class="a" style="left:1384px;top:674.5px;width:1px;height:45.5px;background:#e6e6e6;z-index:20;"></div>
<div class="t" style="left:628.6px;top:690.3px;font-size:15px;color:#111;font-weight:400;z-index:20;">Allowances</div>
<div class="t" style="left:931.6px;top:690.3px;font-size:15px;color:#111;font-weight:400;z-index:20;">Leave</div>
<div class="t" style="left:1199.2px;top:690.3px;font-size:15px;color:#111;font-weight:400;z-index:20;">Comments</div>
<div class="a" style="left:516px;top:622px;width:298px;height:67px;background:#fff;z-index:21;"></div>
<div class="a" style="left:516px;top:621.5px;width:298px;height:1.0px;background:#f0f0f0;z-index:21;"></div>
<div class="a" style="left:516px;top:628px;width:298px;height:27.5px;background:#5a98f5;z-index:21;"></div>
<div class="t" style="left:526.0px;top:632.9px;font-size:17px;color:#fff;font-weight:400;transform:scaleX(1.017);transform-origin:0 0;z-index:21;">Chef</div>
<div class="a" style="left:516px;top:655.5px;width:298px;height:28.5px;background:#e8e8e8;z-index:21;"></div>
<div class="t" style="left:526.0px;top:660.6px;font-size:17px;color:#333;font-weight:400;transform:scaleX(0.980);transform-origin:0 0;z-index:21;">Sioux Chef</div>
<div class="a" style="left:515px;top:584px;width:300px;height:106px;border:1px solid #2d8fdd;border-radius:4px;box-sizing:border-box;z-index:22;"></div>
<div class="a" style="left:515px;top:750.3px;width:130px;height:46.40000000000009px;border:1px solid #2d8fdd;border-radius:3px;box-sizing:border-box;background:#fff;z-index:20;"></div>
<div class="t" style="left:531.0px;top:766.4px;font-size:15px;color:#2d8fdd;font-weight:400;z-index:20;">Save Changes</div>
<div class="a" style="left:650.3px;top:750.3px;width:172.5px;height:46.40000000000009px;background:#6daa4b;border-radius:3px;z-index:20;"></div>
<div class="t" style="left:666.0px;top:766.4px;font-size:15px;color:#fff;font-weight:400;z-index:20;">Save &amp; Approve Shift</div>
<div class="t" style="left:1310.5px;top:765.5px;font-size:14px;color:#222;font-weight:400;text-decoration:underline;z-index:20;">Cancel</div>
<div class="a" style="left:7.5px;top:706.6px;width:403.5px;height:83.69999999999993px;border:4.2px solid #f28a2e;box-sizing:border-box;filter:drop-shadow(0 2px 1.5px rgba(0,0,0,0.8));z-index:30;"></div>
<div class="a" style="left:1800px;top:707px;width:88.59999999999991px;height:67.29999999999995px;border:4.2px solid #f28a2e;box-sizing:border-box;filter:drop-shadow(0 2px 1.5px rgba(0,0,0,0.8));z-index:30;"></div>
<div class="a" style="left:501.4px;top:610.8px;width:324.6px;height:53.5px;border:4.2px solid #f28a2e;box-sizing:border-box;filter:drop-shadow(0 2px 1.5px rgba(0,0,0,0.8));z-index:30;"></div>
<div class="a" style="left:635.8px;top:725.4px;width:204.60000000000002px;height:87.60000000000002px;border:4.2px solid #f28a2e;box-sizing:border-box;filter:drop-shadow(0 2px 1.5px rgba(0,0,0,0.8));z-index:30;"></div>
</body></html>
